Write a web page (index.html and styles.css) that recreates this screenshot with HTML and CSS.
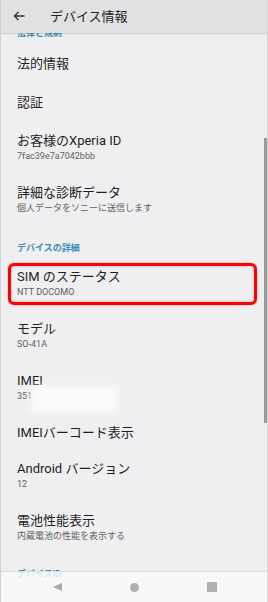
FILE: index.html
```html
<!DOCTYPE html>
<html lang="ja">
<head>
  <meta charset="UTF-8">
  <meta name="viewport" content="width=device-width, initial-scale=1.0">
  <title>デバイス情報</title>
  <link rel="stylesheet" href="styles.css">
</head>
<body>

<div class="phone">
  <!-- App bar -->
  <div class="appbar">
    <svg class="back" width="12" height="10" viewBox="0 0 12 10">
      <path d="M11.5 5H1.5M5.5 1L1.5 5L5.5 9" fill="none" stroke="#333" stroke-width="1.4"/>
    </svg>
    <span class="appbar-title">デバイス情報</span>
  </div>

  <!-- Settings list -->
  <div class="content">
    <div class="list">
      <div class="category first">法律と規制</div>
      <div class="item single"><div class="title">法的情報</div></div>
      <div class="item single"><div class="title">認証</div></div>
      <div class="item">
        <div class="title">お客様のXperia ID</div>
        <div class="summary">7fac39e7a7042bbb</div>
      </div>
      <div class="item">
        <div class="title">詳細な診断データ</div>
        <div class="summary">個人データをソニーに送信します</div>
      </div>

      <div class="category">デバイスの詳細</div>
      <div class="item highlighted">
        <div class="title">SIM のステータス</div>
        <div class="summary">NTT DOCOMO</div>
        <span class="marker"></span>
      </div>
      <div class="item">
        <div class="title">モデル</div>
        <div class="summary">SO-41A</div>
      </div>
      <div class="item">
        <div class="title">IMEI</div>
        <div class="summary">351<span class="masked"></span></div>
      </div>
      <div class="item single short"><div class="title">IMEIバーコード表示</div></div>
      <div class="item">
        <div class="title">Android バージョン</div>
        <div class="summary">12</div>
      </div>
      <div class="item">
        <div class="title">電池性能表示</div>
        <div class="summary">内蔵電池の性能を表示する</div>
      </div>
      <div class="category last">デバイスID</div>
    </div>
    <div class="scrollbar"></div>
  </div>

  <!-- Navigation bar -->
  <div class="navbar">
    <span class="nav-back"></span>
    <span class="nav-home"></span>
    <span class="nav-recent"></span>
  </div>
</div>

</body>
</html>
```

FILE: styles.css
```css
body {
  margin: 0;
  padding: 0;
  font-family: Roboto, "Noto Sans CJK JP", sans-serif;
  background-color: #efeff1;
}

.phone {
  position: relative;
  width: 268px;
  height: 602px;
  box-sizing: border-box;
  border-left: 1px solid #d2d2d4;
  border-right: 1px solid #d8d8da;
  display: flex;
  flex-direction: column;
  overflow: hidden;
  background-color: #efeff1;
}

.appbar {
  height: 33px;
  flex-shrink: 0;
  display: flex;
  align-items: center;
  background-color: #e1e1e3;
  box-shadow: 0 1px 1px rgba(0, 0, 0, 0.12);
  position: relative;
  z-index: 2;
}

.back {
  margin-left: 12px;
  margin-top: -2px;
}

.appbar-title {
  margin-left: 25px;
  margin-top: -3px;
  font-size: 13px;
  color: #222;
}

.content {
  flex: 1;
  position: relative;
  overflow: hidden;
}

/* list is scrolled a little down, first header is half hidden */
.list {
  margin-top: -22px;
}

.category {
  height: 32px;
  box-sizing: border-box;
  padding: 15px 0 0 16px;
  font-size: 9px;
  line-height: 12px;
  font-weight: bold;
  color: #3b8db2;
}

.category.first {
  height: 34px;
  padding-top: 16px;
}

.category.last {
  padding-top: 13px;
}

.item {
  position: relative;
  height: 52px;
  box-sizing: border-box;
  padding: 9px 16px 0 16px;
}

.item.single {
  height: 39px;
  padding-top: 10px;
}

.item.single.short {
  height: 36px;
  padding-top: 9px;
}

.title {
  font-size: 13px;
  line-height: 18px;
  color: #1f1f1f;
}

.summary {
  position: relative;
  font-size: 9px;
  line-height: 13px;
  color: #616161;
}

.masked {
  position: absolute;
  left: 14px;
  top: -4px;
  width: 86px;
  height: 26px;
  background-color: #fbfbfb;
  filter: blur(3px);
}

.marker {
  position: absolute;
  left: 7px;
  right: 10px;
  top: 4px;
  bottom: 6px;
  border: 3px solid #ff0000;
  border-radius: 6px;
  box-shadow: 0 0 2px rgba(0, 0, 0, 0.35), inset 0 0 3px rgba(0, 0, 0, 0.25);
}

.scrollbar {
  position: absolute;
  right: 0;
  top: 105px;
  width: 3px;
  height: 285px;
  background-color: #9a9a9a;
}

.navbar {
  position: absolute;
  left: 0;
  right: 0;
  bottom: 0;
  height: 30px;
  border-top: 1px solid #dcdcde;
  background-color: rgba(250, 250, 250, 0.82);
  display: flex;
  align-items: center;
  justify-content: space-between;
  padding: 0 50px 0 52px;
  z-index: 2;
}

.nav-back {
  width: 0;
  height: 0;
  border-top: 4.5px solid transparent;
  border-bottom: 4.5px solid transparent;
  border-right: 9px solid #a9a9a9;
}

.nav-home {
  width: 9px;
  height: 9px;
  border-radius: 50%;
  background-color: #b0b0b0;
}

.nav-recent {
  width: 10px;
  height: 10px;
  background-color: #b0b0b0;
}
```
